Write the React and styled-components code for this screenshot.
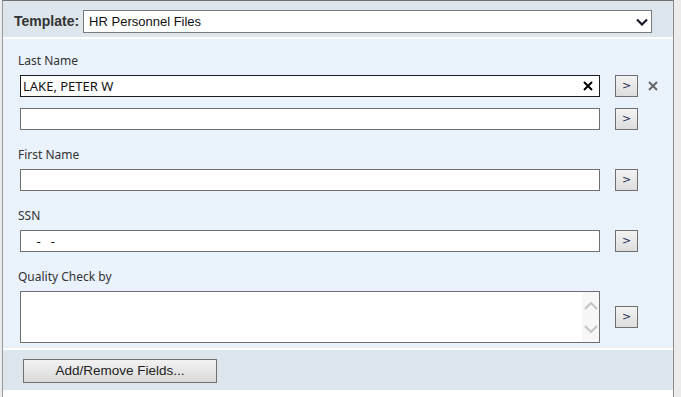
import React from 'react';
import styled, { createGlobalStyle } from 'styled-components';

const GlobalStyle = createGlobalStyle`
  body {
    margin: 0;
    background-color: #ececec;
    font-family: "Noto Sans", "Liberation Sans", sans-serif;
  }
`;

const Panel = styled.div`
  margin-left: 2px;
  width: 672px;
  min-height: 397px;
  box-sizing: border-box;
  background-color: #fff;
  border-left: 1px solid #9a9a9a;
  border-right: 1px solid #8c8c8c;
  border-top: 1px solid #707070;
`;

const Header = styled.div`
  display: flex;
  align-items: flex-start;
  height: 38px;
  box-sizing: border-box;
  padding: 9px 0 0 11px;
  background-color: #dce6ec;
  border-bottom: 2px solid #fff;
`;

const TemplateLabel = styled.span`
  font-family: "Liberation Sans", Arial, sans-serif;
  font-weight: bold;
  font-size: 14px;
  line-height: 23px;
  color: #333;
  margin-right: 4px;
`;

const Select = styled.div`
  display: flex;
  align-items: center;
  justify-content: space-between;
  width: 569px;
  height: 23px;
  box-sizing: border-box;
  padding: 0 3px 0 5px;
  background-color: #fff;
  border: 1px solid #7a7a7a;
  font-family: "Liberation Sans", Arial, sans-serif;
  font-size: 13px;
  color: #111;
`;

const Content = styled.div`
  background-color: #eaf2fc;
  padding: 14px 0 5px 15px;
  border-bottom: 2px solid #fff;
`;

const Group = styled.div`
  display: flex;
  flex-direction: column;
  gap: 11px;
  margin-bottom: ${({ last }) => (last ? '0' : '17px')};
`;

const Label = styled.div`
  height: 15px;
  line-height: 15px;
  font-size: 12px;
  color: #333;
  margin-bottom: -4px;
`;

const Row = styled.div`
  display: flex;
  align-items: center;
  padding-left: 2px;
`;

const Field = styled.div`
  position: relative;
  display: flex;
  align-items: center;
  width: 580px;
  height: ${({ tall }) => (tall ? '52px' : '22px')};
  box-sizing: border-box;
  padding-left: 2px;
  margin-right: 15px;
  background-color: #fff;
  border: 1px solid ${({ focused }) => (focused ? '#1c1c1c' : '#707070')};
  font-size: 13px;
  color: #111;
  white-space: pre;
`;

const ClearIcon = styled.span`
  position: absolute;
  right: 6px;
  top: 5px;
  display: flex;
`;

const Scroller = styled.div`
  position: absolute;
  right: 0;
  top: 0;
  bottom: 0;
  width: 17px;
  display: flex;
  flex-direction: column;
  justify-content: space-between;
  align-items: center;
  padding: 10px 0 9px;
  box-sizing: border-box;
  background-color: #f7f7f7;
`;

const GoButton = styled.button`
  width: 23px;
  height: 22px;
  padding: 0 0 2px;
  box-sizing: border-box;
  border: 1px solid #707070;
  background: linear-gradient(#f3f3f3, #dddddd);
  font-family: "DejaVu Sans", sans-serif;
  font-size: 11px;
  color: #1d2a50;
  line-height: 1;
`;

const DeleteIcon = styled.span`
  display: flex;
  margin-left: 10px;
`;

const Footer = styled.div`
  height: 40px;
  box-sizing: border-box;
  padding: 8px 0 0 20px;
  background-color: #dce6ec;
`;

const FooterButton = styled.button`
  width: 194px;
  height: 24px;
  box-sizing: border-box;
  border: 1px solid #707070;
  background: linear-gradient(#f2f2f2, #dadada);
  font-family: "Liberation Sans", Arial, sans-serif;
  font-size: 13.5px;
  color: #222;
`;

const Cross = ({ color, size = 10 }) => (
  <svg width={size} height={size} viewBox="0 0 10 10">
    <path d="M1 1 L9 9 M9 1 L1 9" stroke={color} strokeWidth="2" />
  </svg>
);

const Chevron = ({ up, color }) => (
  <svg width="14" height="8" viewBox="0 0 14 8">
    <polyline
      points={up ? '1,7 7,1 13,7' : '1,1 7,7 13,1'}
      fill="none"
      stroke={color}
      strokeWidth="2"
    />
  </svg>
);

const fields = [
  { label: 'Last Name', rows: [{ value: 'LAKE, PETER W', focused: true, remove: true }, { value: '' }] },
  { label: 'First Name', rows: [{ value: '' }] },
  { label: 'SSN', rows: [{ value: '    -   -' }] },
  { label: 'Quality Check by', rows: [{ value: '', tall: true }] },
];

function App() {
  return (
    <>
      <GlobalStyle />
      <Panel>
        <Header>
          <TemplateLabel>Template:</TemplateLabel>
          <Select>
            HR Personnel Files
            <svg width="12" height="8" viewBox="0 0 12 8">
              <polyline points="1,1.5 6,6.5 11,1.5" fill="none" stroke="#1a1a2a" strokeWidth="2.2" />
            </svg>
          </Select>
        </Header>
        <Content>
          {fields.map((f, i) => (
            <Group key={f.label} last={i === fields.length - 1}>
              <Label>{f.label}</Label>
              {f.rows.map((r, j) => (
                <Row key={j}>
                  <Field focused={r.focused} tall={r.tall}>
                    {r.value}
                    {r.focused && (
                      <ClearIcon>
                        <Cross color="#000" />
                      </ClearIcon>
                    )}
                    {r.tall && (
                      <Scroller>
                        <Chevron up color="#c4c4c4" />
                        <Chevron color="#c4c4c4" />
                      </Scroller>
                    )}
                  </Field>
                  <GoButton>&gt;</GoButton>
                  {r.remove && (
                    <DeleteIcon>
                      <Cross color="#666" />
                    </DeleteIcon>
                  )}
                </Row>
              ))}
            </Group>
          ))}
        </Content>
        <Footer>
          <FooterButton>Add/Remove Fields...</FooterButton>
        </Footer>
      </Panel>
    </>
  );
}

export default App;
